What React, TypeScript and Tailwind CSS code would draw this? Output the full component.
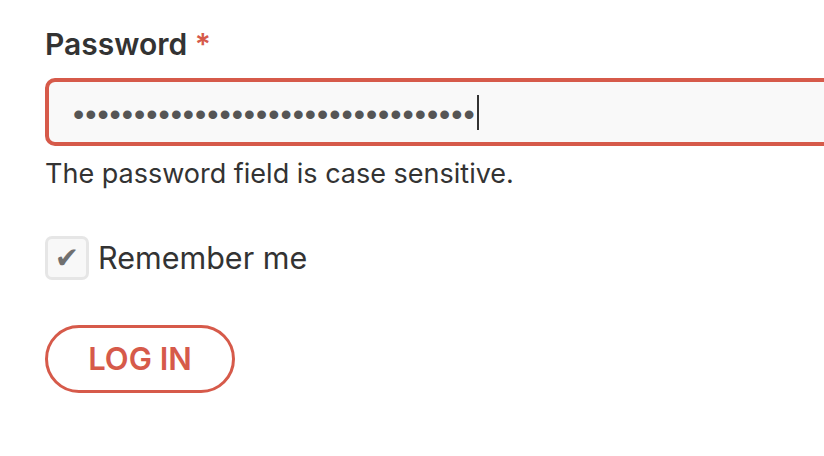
import React from "react";

const RED = "text-[#d65a4a]";

export default function App() {
  const dots = "•".repeat(33);

  return (
    <div className="min-h-screen bg-white pl-[45px] pt-[24px] font-['Inter','Liberation_Sans',sans-serif] text-[#333]">
      <label className="block text-[30px] font-semibold leading-[40px]">
        Password <span className={RED}>*</span>
      </label>

      <div className="mt-[14px] flex h-[68px] w-[820px] items-center rounded-[10px] border-4 border-[#d65a4a] bg-[#f9f9f9] pl-[24px]">
        <span className="mt-[3px] font-['Liberation_Sans',sans-serif] text-[32px] leading-none tracking-[1px] text-[#555]">
          {dots}
        </span>
        <span className="ml-[1px] h-[35px] w-[2px] bg-[#333]" />
      </div>

      <p className="mt-[8px] text-[27px] leading-[40px] text-[#333]">
        The password field is case sensitive.
      </p>

      <div className="mt-[42px] flex items-center gap-[9px]">
        <div className="flex h-[44px] w-[44px] items-center justify-center rounded-[7px] border-[3px] border-[#e6e6e6] bg-[#f8f8f8]">
          <span className="font-['DejaVu_Sans',sans-serif] text-[29px] leading-none text-[#707070]">
            ✔
          </span>
        </div>
        <span className="text-[30.5px] leading-[40px] text-[#333]">Remember me</span>
      </div>

      <button className="mt-[45px] flex h-[68px] w-[190px] items-center justify-center rounded-full border-[3.5px] border-[#d65a4a] bg-white text-[31px] font-semibold text-[#d65a4a]">
        LOG IN
      </button>
    </div>
  );
}
